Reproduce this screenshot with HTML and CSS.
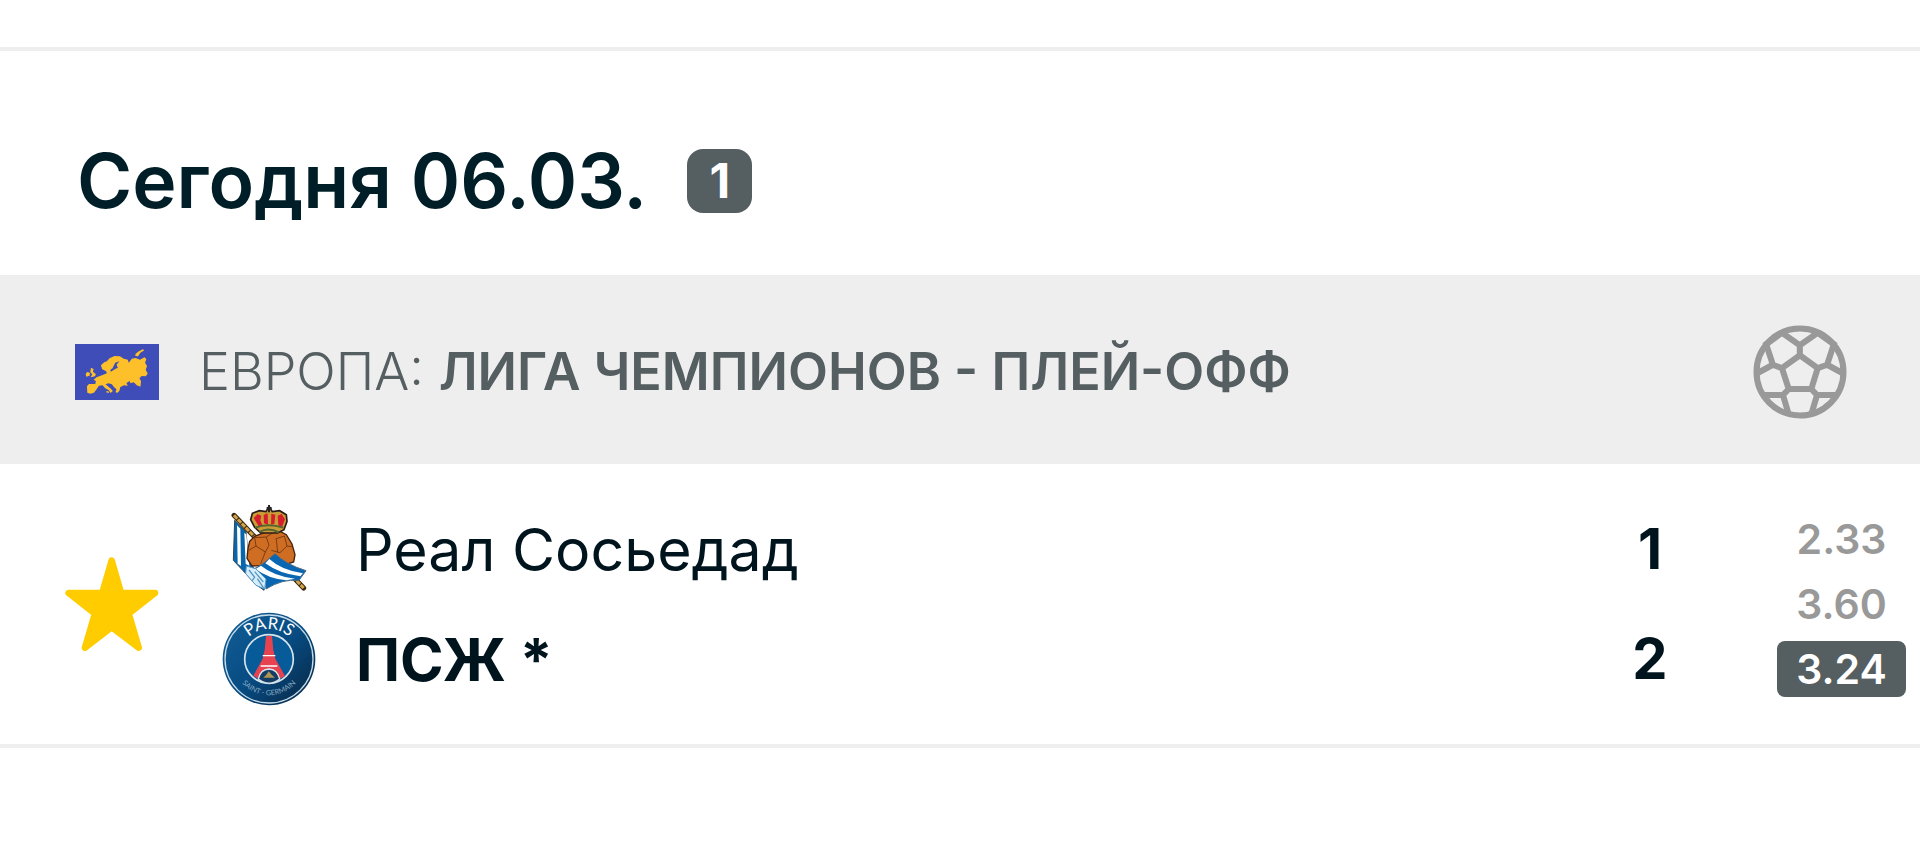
FILE: index.html
```html
<!DOCTYPE html>
<html lang="ru">
<head>
<meta charset="utf-8">
<meta name="viewport" content="width=device-width, initial-scale=1">
<title>Сегодня 06.03.</title>
<link rel="stylesheet" href="styles.css">
</head>
<body>
<main class="feed">
  <header class="day">
    <h1 class="day-title">Сегодня 06.03.</h1>
    <span class="day-count">1</span>
  </header>
  <section class="league">
    <svg class="flag" viewBox="43 40 253 168" preserveAspectRatio="none" aria-hidden="true">
      <rect x="43" y="40" width="253" height="168" fill="#3e4db8"/>
      <g fill="#fdbf2a">
        <path d="M80 186 L79 167 L85 160 L104 160 L106 151 L99 147 L108 140 L120 135 L132 131 L139 128 L137 122 L125 116 L121 104 L131 95 L139 92 L147 83 L162 76 L178 77 L190 84 L202 87 L205 96 L214 84 L225 82 L239 87 L252 80 L258 85 L254 96 L260 106 L256 117 L262 129 L256 137 L244 136 L237 143 L242 152 L240 168 L229 164 L220 155 L210 158 L208 151 L198 157 L202 165 L190 164 L179 170 L177 180 L170 187 L165 184 L168 176 L161 170 L154 161 L144 158 L135 161 L151 174 L157 181 L150 187 L145 179 L134 173 L126 164 L115 165 L108 176 L100 186 L89 189 Z"/>
        <path d="M91 111 l8 4 -2 8 9 8 -3 6 -13 3 5 -9 -6 -6z M79 124 l9 2 -1 9 -10 3 -2 -7z M225 70 l8 -7 14 -7 5 3 -12 7 -7 11 -8 -1z M138 181 l9 2 -3 4 -7 -2z"/>
      </g>
      <path d="M177 92 L164 96 L156 113 L149 118 L151 123 L163 116 L172 111 L168 102 Z" fill="#3e4db8"/>
    </svg>
    <a class="league-name" href="#league">ЕВРОПА: <strong>ЛИГА ЧЕМПИОНОВ - ПЛЕЙ-ОФФ</strong></a>
    <svg class="ball" viewBox="41 44 279 279" fill="none" stroke="#999" stroke-width="18" aria-hidden="true">
      <circle cx="180.500" cy="183.500" r="129"/>
      <path d="M180 134 L233 172 L214 234 H147 L127 172 Z M180 134 V104 L127 67 M180 104 L233 67 M127 172 L100 162 L80 101 L127 67 M100 162 L52 188 M233 172 L261 162 L281 101 L233 67 M261 162 L309 188 M147 234 L130 252 H72 M130 252 L147 309 M214 234 L231 252 H289 M231 252 L214 309"/>
    </svg>
  </section>
  <article class="match">
    <button class="favourite" type="button" aria-label="Избранное" aria-pressed="true">
      <svg class="star" viewBox="46 47 280 282" aria-hidden="true">
        <path d="M185 58 L213 155 H315 L236 217 L266 319 L185 257 L105 319 L135 217 L56 155 H157 Z" fill="#fc0" stroke="#fc0" stroke-width="20" stroke-linejoin="round"/>
      </svg>
    </button>
    <div class="teams">
      <div class="team">
        <svg class="crest" viewBox="21 21 282 282" aria-hidden="true">
          <path d="M57 61 L266 279" stroke="#38270e" stroke-width="15" stroke-linecap="round"/>
          <path d="M57 61 L266 279" stroke="#d2a34a" stroke-width="9" stroke-dasharray="14 3"/>
          <path d="M59 76 L93 111 L101 201 L152 258 L147 286 L121 267 L83 226 L55 196 Z" fill="#0866ad" stroke="#345" stroke-width="3"/>
          <path d="M66 91 L76 101 L78 213 L68 206 Z M88 114 L94 118 L103 212 L92 207 Z" fill="#fff"/>
          <path d="M99 160 L104 139 L119 124 L153 111 L186 104 L214 119 L231 147 L240 179 L236 201 L204 211 L111 213 L96 190 Z" fill="#cf6e23" stroke="#44200e" stroke-width="4"/>
          <path d="M101 166 L123 153 L151 171 L137 207 M123 153 L119 128 L154 126 L162 151 L151 171 M154 126 L183 107 M181 132 L208 123 L216 153 L195 173 L169 166 M184 133 L188 173 M216 153 L232 155" fill="none" stroke="#7a3d16" stroke-width="3"/>
          <path d="M180 176 Q212 208 273 227 L252 256 Q202 251 153 282 L150 252 L113 223 Q137 215 180 176Z" fill="#0866b2" stroke="#476987" stroke-width="3"/>
          <path d="M163 192 Q200 226 264 235 L256 244 Q192 236 151 205Z M138 212 Q176 243 240 251 L214 256 Q160 251 122 222Z" fill="#fff"/>
          <path d="M94 213 L122 221 L153 252 L149 282 L123 271 L92 236Z" fill="#d9edfa" stroke="#5299c7" stroke-width="3"/>
          <path d="M102 225 L119 247 L111 257 M119 230 L145 261 M127 251 L147 281" fill="none" stroke="#5299c7" stroke-width="4"/>
          <path d="M119 97 L107 74 L112 55 L133 47 L153 50 L162 34 L172 50 L194 47 L214 59 L216 79 L207 104 L188 114 L137 114 Z" fill="#ca9c36" stroke="#2b1a18" stroke-width="5"/>
          <path d="M116 69 l12 -12 11 5 -3 14 7 17 -10 4z M146 60 l12 -5 1 34 -12 -4z M169 56 l12 3 -3 28 -10 2z M188 62 l12 -5 10 16 -9 23 -11 -5z" fill="#d51d2c"/>
          <path d="M120 98 Q160 83 205 98 M133 111 Q160 96 192 112" fill="none" stroke="#536631" stroke-width="6"/>
          <path d="M162 30 V52 M155 39 H170" stroke="#222" stroke-width="6"/>
        </svg>
        <span class="team-name">Реал Сосьедад</span>
        <span class="score">1</span>
      </div>
      <div class="team">
        <svg class="crest" viewBox="21 19 282 282" aria-hidden="true">
          <defs>
            <linearGradient id="navy" x1="0" y1="0" x2="1" y2="1">
              <stop offset="0" stop-color="#126097"/><stop offset=".5" stop-color="#074c83"/><stop offset="1" stop-color="#092541"/>
            </linearGradient>
            <path id="arcTop" d="M79 124 A91 91 0 0 1 245 124"/>
            <path id="arcBottom" d="M58 190 A108 108 0 0 0 266 190"/>
          </defs>
          <circle cx="162" cy="160" r="139" fill="url(#navy)"/>
          <circle cx="162" cy="160" r="132" fill="none" stroke="#c7dce9" stroke-width="4"/>
          <circle cx="162" cy="160" r="73" fill="#075b98" stroke="#d7e5ed" stroke-width="5"/>
          <path d="M153 91 H171 L175 133 L181 159 L210 211 L193 220 Q181 190 162 190 Q143 190 131 220 L115 210 L143 159 L149 133 Z" fill="#e64250"/>
          <path d="M143 150 H181 M137 181 H187" stroke="#fff" stroke-width="4"/>
          <path d="M130 220 Q136 191 162 190 Q187 191 194 220 Q162 245 130 220Z" fill="#153c65" stroke="#d7e5ed" stroke-width="4"/>
          <path d="M145 216 L154 207 L161 197 L170 207 L180 216 Z" fill="#ad9553"/>
          <text class="crest-city"><textPath href="#arcTop" startOffset="50%" text-anchor="middle">PARIS</textPath></text>
          <text class="crest-suburb"><textPath href="#arcBottom" startOffset="50%" text-anchor="middle">SAINT - GERMAIN</textPath></text>
        </svg>
        <span class="team-name winner">ПСЖ *</span>
        <span class="score">2</span>
      </div>
    </div>
    <div class="odds">
      <span class="odd">2.33</span>
      <span class="odd">3.60</span>
      <span class="odd odd-won">3.24</span>
    </div>
  </article>
</main>
</body>
</html>
```
FILE: styles.css
```css
* {
  box-sizing: border-box;
}

body {
  margin: 0;
  background: #fff;
  color: #001e28;
  font-family: Inter, "Noto Sans", sans-serif;
}

.feed {
  margin-top: 47px;
  border-top: 4px solid #eee;
  border-bottom: 4px solid #eee;
}

.day {
  display: flex;
  align-items: center;
  gap: 40px;
  padding: 80px 77px 44px;
}

.day-title {
  margin: 0;
  font-size: 75px;
  font-weight: 600;
  line-height: 100px;
}

.day-count {
  width: 65px;
  border-radius: 16px;
  background: #555e61;
  color: #fff;
  font-size: 48px;
  font-weight: 700;
  line-height: 64px;
  text-align: center;
}

.league {
  display: flex;
  align-items: center;
  padding: 50px 73px 45px 75px;
  background: #eee;
}

.flag {
  width: 84px;
  height: 56px;
  margin-right: 40px;
}

.league-name {
  flex: 1;
  color: #555e61;
  font-size: 52px;
  font-weight: 300;
  line-height: 64px;
  text-decoration: none;
}

.league-name strong {
  font-weight: 600;
}

.ball {
  width: 94px;
  height: 94px;
}

.match {
  display: flex;
  align-items: center;
  padding: 30px 14px 30px 65px;
  color: #00141e;
}

.favourite {
  display: block;
  padding: 0;
  border: 0;
  background: none;
  cursor: pointer;
}

.star {
  display: block;
  width: 94px;
  height: 94px;
}

.teams {
  flex: 1;
  margin-left: 63px;
}

.team {
  display: flex;
  align-items: center;
  height: 110px;
}

.crest {
  width: 94px;
  height: 94px;
}

.crest-city {
  fill: #fff;
  font: 400 50px Lato, sans-serif;
}

.crest-suburb {
  fill: #86a8c2;
  font: 400 22px Lato, sans-serif;
}

.team-name {
  flex: 1;
  margin-left: 40px;
  font-size: 59px;
}

.winner {
  font-weight: 700;
}

.score {
  width: 60px;
  font-size: 56px;
  font-weight: 700;
  text-align: center;
}

.odds {
  display: flex;
  flex-direction: column;
  gap: 9px;
  width: 129px;
  margin-left: 97px;
}

.odd {
  border-radius: 8px;
  color: #999;
  font-size: 41px;
  font-weight: 600;
  line-height: 56px;
  text-align: center;
}

.odd-won {
  background: #555e61;
  color: #fff;
}
```
